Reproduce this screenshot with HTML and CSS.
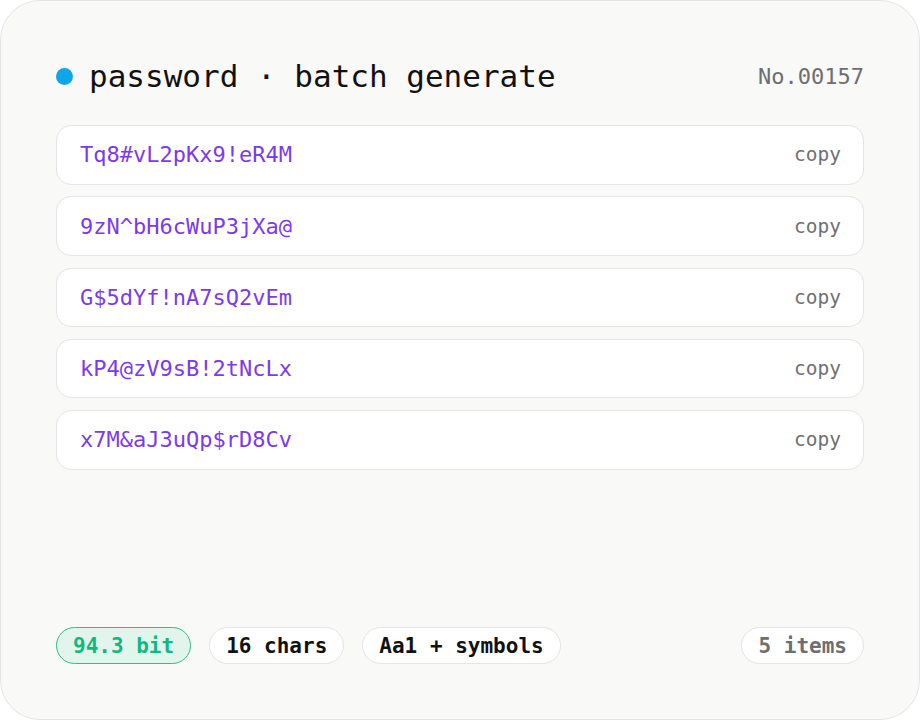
FILE: index.html
```html
<!DOCTYPE html>
<html lang="en">

<head>
    <meta charset="UTF-8">
    <meta name="viewport" content="width=device-width, initial-scale=1.0">
    <title>password batch generate</title>
    <link rel="stylesheet" href="styles.css">
</head>

<body>
    <div class="card">
        <header class="head">
            <div class="title">
                <span class="dot"></span>
                <h1>password · batch generate</h1>
            </div>
            <span class="serial">No.00157</span>
        </header>

        <ul class="list">
            <li class="row"><span class="pw">Tq8#vL2pKx9!eR4M</span><span class="copy">copy</span></li>
            <li class="row"><span class="pw">9zN^bH6cWuP3jXa@</span><span class="copy">copy</span></li>
            <li class="row"><span class="pw">G$5dYf!nA7sQ2vEm</span><span class="copy">copy</span></li>
            <li class="row"><span class="pw">kP4@zV9sB!2tNcLx</span><span class="copy">copy</span></li>
            <li class="row"><span class="pw">x7M&amp;aJ3uQp$rD8Cv</span><span class="copy">copy</span></li>
        </ul>

        <footer class="foot">
            <div class="chips">
                <span class="chip chip-green">94.3 bit</span>
                <span class="chip">16 chars</span>
                <span class="chip">Aa1 + symbols</span>
            </div>
            <span class="chip chip-muted">5 items</span>
        </footer>
    </div>
</body>

</html>
```

FILE: styles.css
```css
body {
    margin: 0;
    background: #ffffff;
    font-family: "DejaVu Sans Mono", "Liberation Mono", monospace;
}

.card {
    box-sizing: border-box;
    width: 920px;
    height: 720px;
    background: #f9f9f8;
    border: 1px solid #e4e4e7;
    border-radius: 40px;
    padding: 55px 55px 55px 55px;
    display: flex;
    flex-direction: column;
}

.head {
    height: 40px;
    display: flex;
    justify-content: space-between;
    align-items: center;
}

.title {
    display: flex;
    align-items: center;
    gap: 16px;
}

.dot {
    width: 17px;
    height: 17px;
    border-radius: 50%;
    background: #0ea5e9;
}

h1 {
    margin: 0;
    font-size: 31px;
    font-weight: 400;
    color: #111111;
}

.serial {
    font-size: 22px;
    color: #6e6e6e;
}

.list {
    list-style: none;
    margin: 29px 0 0 0;
    padding: 0;
    display: flex;
    flex-direction: column;
    gap: 11.8px;
}

.row {
    box-sizing: border-box;
    height: 59.5px;
    background: #ffffff;
    border: 1px solid #e4e4e9;
    border-radius: 15px;
    padding: 0 22px 0 23px;
    display: flex;
    justify-content: space-between;
    align-items: center;
}

.pw {
    font-size: 22px;
    color: #7c3aed;
}

.copy {
    font-size: 19.5px;
    color: #707070;
}

.foot {
    margin-top: auto;
    display: flex;
    justify-content: space-between;
    align-items: center;
}

.chips {
    display: flex;
    gap: 18px;
}

.chip {
    box-sizing: border-box;
    height: 37px;
    padding: 0 16px;
    border: 1px solid #e4e4e9;
    border-radius: 19px;
    background: #ffffff;
    display: flex;
    align-items: center;
    font-size: 21px;
    font-weight: 700;
    color: #111111;
}

.chip-green {
    background: #e2f5ec;
    border-color: #2fbf88;
    color: #10b981;
}

.chip-muted {
    color: #6e6e6e;
}
```
